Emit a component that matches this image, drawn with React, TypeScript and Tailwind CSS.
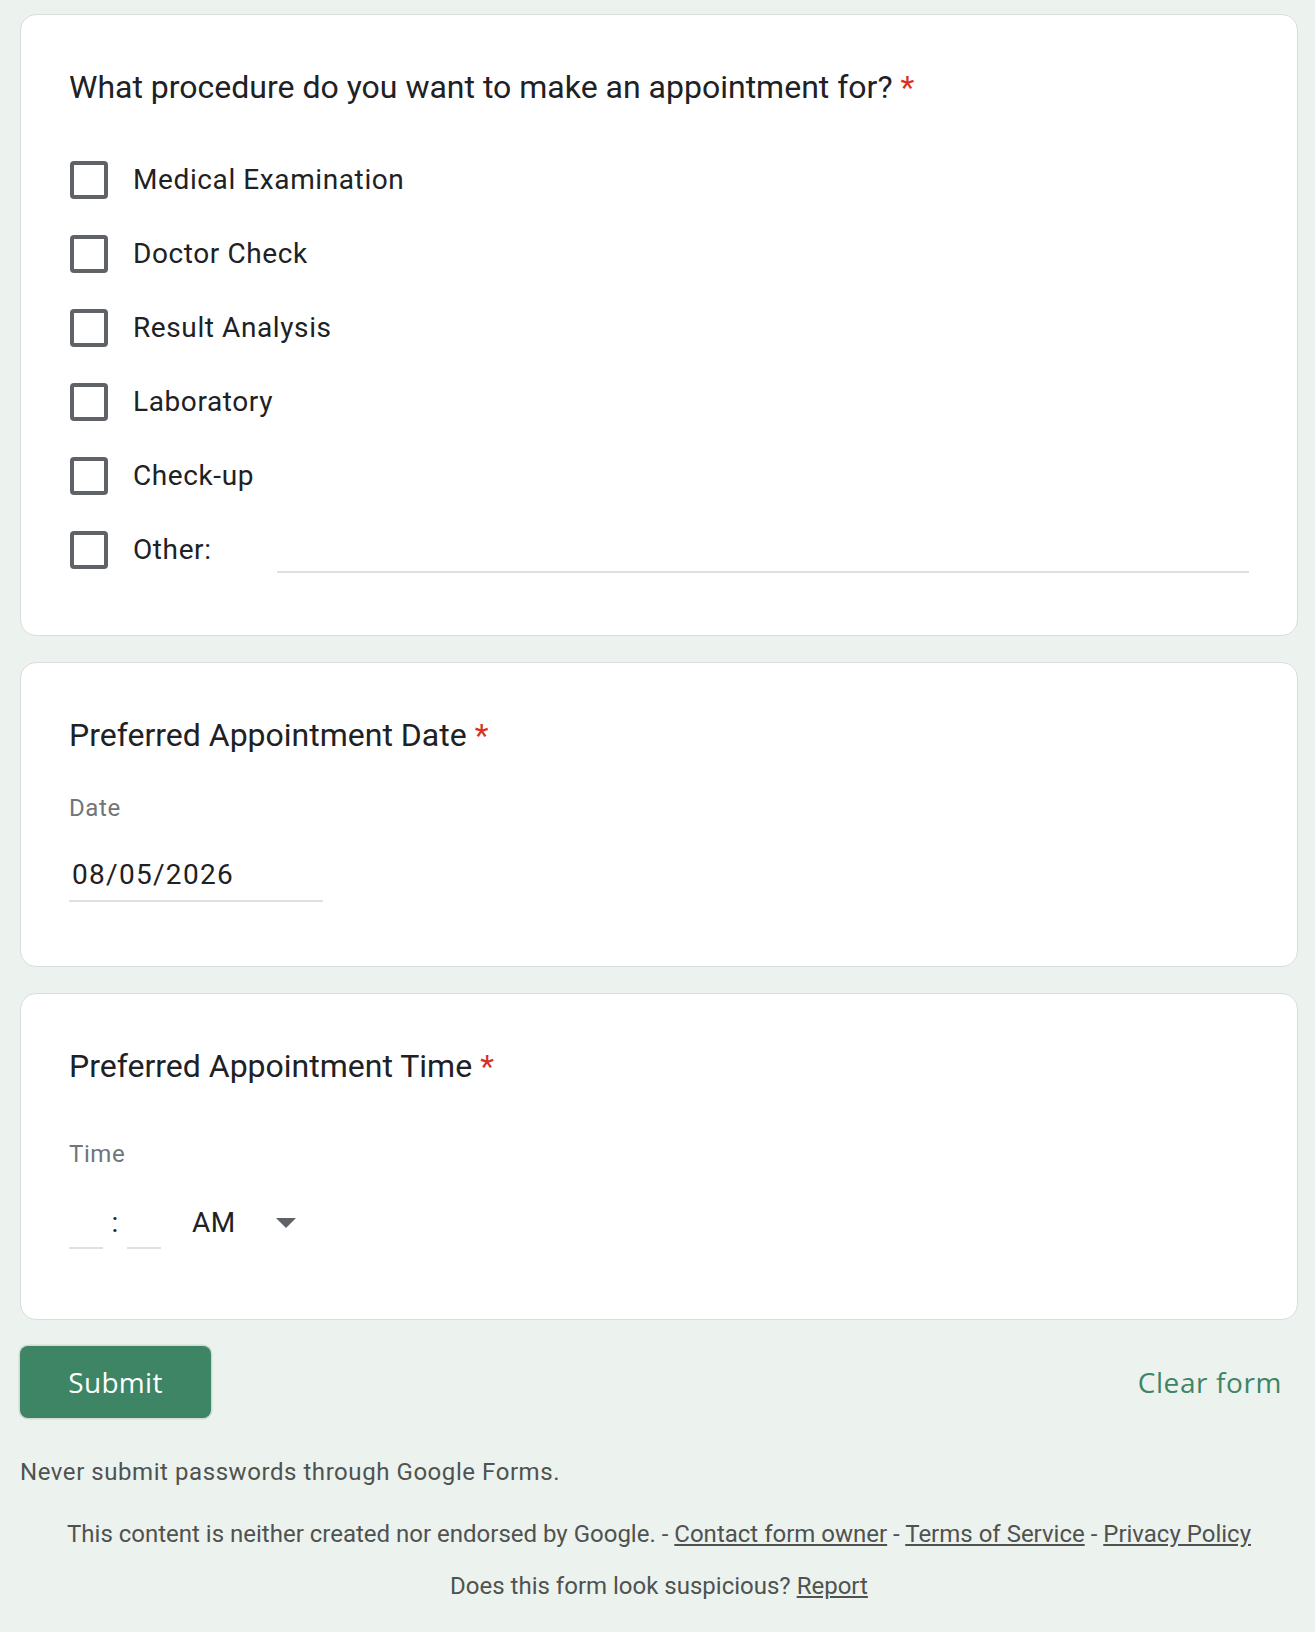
const options = ['Medical Examination', 'Doctor Check', 'Result Analysis', 'Laboratory', 'Check-up']

function Card({ children }: { children: React.ReactNode }) {
  return <div className="rounded-[16px] border border-[#dadce0] bg-white p-[48px]">{children}</div>
}

function QuestionTitle({ text }: { text: string }) {
  return (
    <div className="text-[32px] leading-[48px] text-[#202124]">
      {text}
      <span className="pl-[8px] text-[#d93025]">*</span>
    </div>
  )
}

function Checkbox() {
  return <div className="ml-[1px] h-[38px] w-[38px] shrink-0 rounded-[4px] border-[4px] border-[#5f6368]" />
}

export default function App() {
  return (
    <div className="min-h-[1632px] bg-[#ecf2ee] pb-[30px] pl-[20px] pr-[17px] pt-[14px] font-['Roboto',sans-serif] text-[#202124]">
      <div className="flex flex-col gap-[26px]">
        <Card>
          <QuestionTitle text="What procedure do you want to make an appointment for?" />
          <div className="mt-[32px] flex flex-col">
            {options.map(option => (
              <div key={option} className="flex h-[74px] items-center">
                <Checkbox />
                <span className="ml-[25px] text-[28px] tracking-[0.6px]">{option}</span>
              </div>
            ))}
            <div className="flex h-[74px] items-center">
              <Checkbox />
              <span className="ml-[25px] text-[28px] tracking-[0.6px]">Other:</span>
              <div className="ml-[65px] h-[46px] flex-1 border-b-2 border-[#e0e0e0]" />
            </div>
          </div>
        </Card>

        <Card>
          <QuestionTitle text="Preferred Appointment Date" />
          <div className="mt-[33px] text-[24px] leading-[32px] tracking-[0.6px] text-[#70757a]">Date</div>
          <div className="mb-[16px] mt-[31px] w-[254px] border-b-2 border-[#e0e0e0] pb-[5px] pl-[3px] text-[28px] leading-[40px] tracking-[1.3px]">
            08/05/2026
          </div>
        </Card>

        <Card>
          <QuestionTitle text="Preferred Appointment Time" />
          <div className="mt-[48px] text-[24px] leading-[32px] tracking-[0.6px] text-[#70757a]">Time</div>
          <div className="mb-[22px] mt-[32px] flex items-start">
            <div className="h-[47px] w-[34px] border-b-2 border-[#e0e0e0]" />
            <div className="mt-[1px] w-[24px] text-center text-[28px] leading-[40px]">:</div>
            <div className="h-[47px] w-[34px] border-b-2 border-[#e0e0e0]" />
            <div className="ml-[31px] mt-[1px] text-[28px] leading-[40px] tracking-[0.4px]">AM</div>
            <svg className="ml-[40px] mt-[16px]" width="20" height="10" viewBox="0 0 20 10">
              <path d="M0 0 L20 0 L10 10 Z" fill="#5f6368" />
            </svg>
          </div>
        </Card>
      </div>

      <div className="mt-[26px] flex items-center justify-between">
        <button className="h-[72px] w-[191px] rounded-[8px] bg-[#3d8564] font-['Open_Sans',sans-serif] text-[28px] font-medium tracking-[0.3px] text-white shadow-[0_0_0_1.5px_#d3d9d5]">
          Submit
        </button>
        <span className="pr-[16px] font-['Open_Sans',sans-serif] text-[28px] font-medium tracking-[0.6px] text-[#3d8564]">
          Clear form
        </span>
      </div>

      <div className="mt-[38px] text-[24px] leading-[32px] tracking-[0.56px] text-[#4f5250]">
        Never submit passwords through Google Forms.
      </div>

      <div className="mt-[30px] text-center text-[24px] leading-[32px] text-[#4f5250]">
        This content is neither created nor endorsed by Google. - <span className="underline">Contact form owner</span> -{' '}
        <span className="underline">Terms of Service</span> - <span className="underline">Privacy Policy</span>
      </div>
      <div className="mt-[20px] text-center text-[24px] leading-[32px] text-[#4f5250]">
        Does this form look suspicious? <span className="underline">Report</span>
      </div>
    </div>
  )
}
